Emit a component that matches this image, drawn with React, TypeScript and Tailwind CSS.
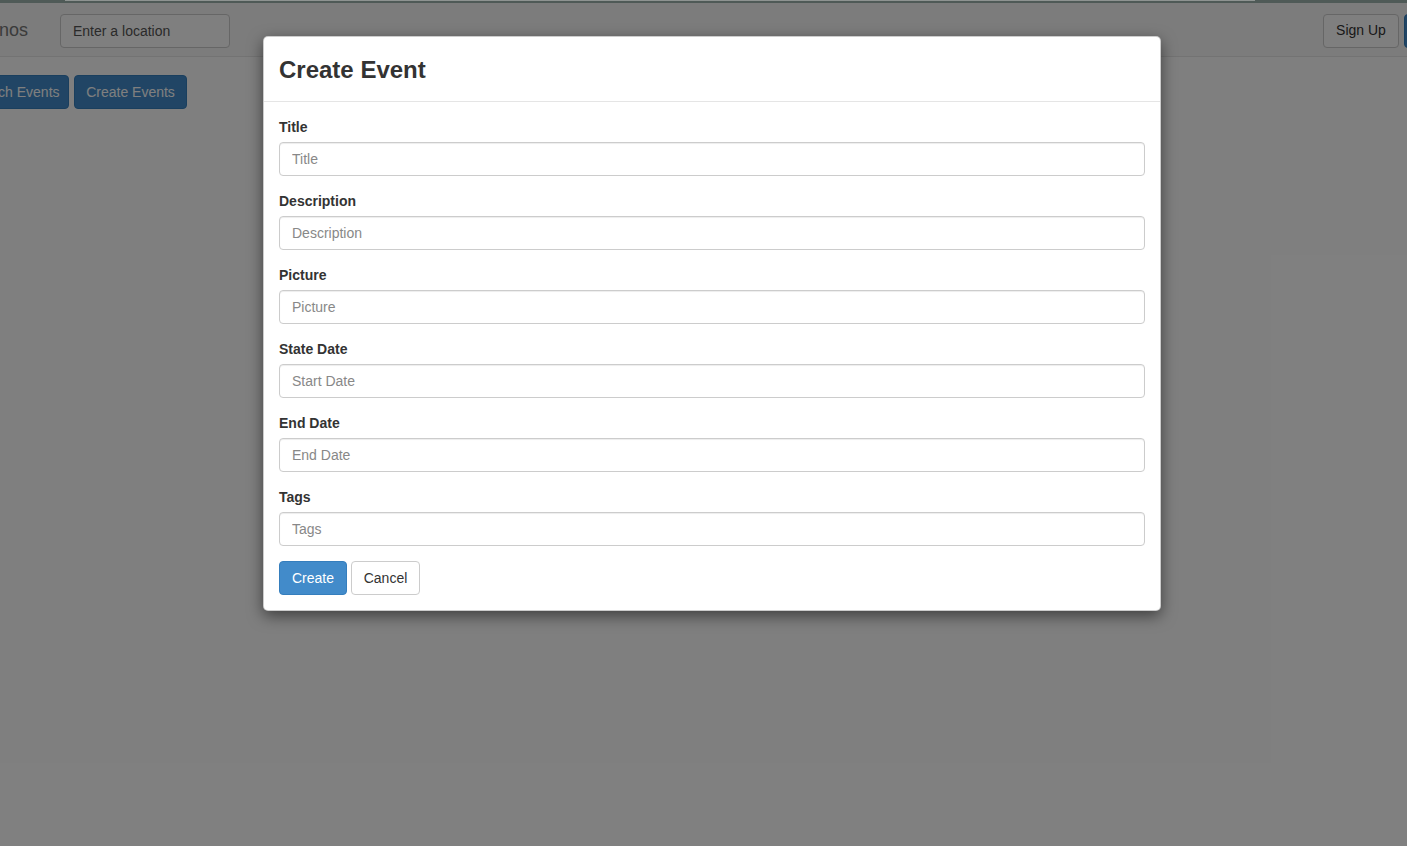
import { ReactNode } from 'react'

const fields = [
  { label: 'Title', placeholder: 'Title' },
  { label: 'Description', placeholder: 'Description' },
  { label: 'Picture', placeholder: 'Picture' },
  { label: 'State Date', placeholder: 'Start Date' },
  { label: 'End Date', placeholder: 'End Date' },
  { label: 'Tags', placeholder: 'Tags' }
]

function FormGroup({ label, children }: { label: string; children: ReactNode }) {
  return (
    <div className="mb-[15px]">
      <label className="block mb-[5px] text-[14px] leading-[20px] font-bold text-[#333]">{label}</label>
      {children}
    </div>
  )
}

export default function App() {
  return (
    <div
      className="relative h-[846px] w-full overflow-hidden bg-white text-[#333]"
      style={{ fontFamily: '"Liberation Sans", Arial, sans-serif' }}
    >
      {/* 상단 바 */}
      <div className="h-[3px] bg-[#4f5a57] flex">
        <div className="ml-[65px] w-[1190px] h-[1px] bg-[#8e9391]" />
      </div>

      {/* 네비게이션 */}
      <nav className="h-[54px] pt-[2px] bg-[#f8f8f8] border-b border-[#e7e7e7] flex items-center overflow-hidden">
        <div className="-ml-[55px] w-[115px] shrink-0 text-[18px] text-[#777] whitespace-nowrap">Hermanos</div>
        <input
          className="w-[170px] h-[34px] px-[12px] text-[14px] border border-[#ccc] rounded-[4px] bg-white placeholder:text-[#555] outline-none"
          placeholder="Enter a location"
        />
        <div className="flex-1" />
        <button className="h-[34px] w-[76px] shrink-0 whitespace-nowrap text-[14px] text-[#333] bg-white border border-[#ccc] rounded-[4px]">
          Sign Up
        </button>
        <button className="ml-[5px] h-[34px] w-[70px] shrink-0 whitespace-nowrap text-[14px] text-white bg-[#428bca] border border-[#357ebd] rounded-[4px] -mr-[67px]">
          Log In
        </button>
      </nav>

      {/* 버튼 */}
      <div className="flex gap-[5px] mt-[18px] overflow-hidden">
        <button className="-ml-[41px] h-[34px] w-[110px] shrink-0 whitespace-nowrap text-[14px] text-white bg-[#428bca] border border-[#357ebd] rounded-[4px]">
          Search Events
        </button>
        <button className="h-[34px] w-[113px] shrink-0 whitespace-nowrap text-[14px] text-white bg-[#428bca] border border-[#357ebd] rounded-[4px]">
          Create Events
        </button>
      </div>

      {/* 모달 */}
      <div className="absolute inset-x-0 top-[3px] bottom-0 bg-black/50 pt-[33px] pl-[263px]">
        <div className="w-[898px] bg-white border border-black/20 rounded-[5px] shadow-[0_5px_15px_rgba(0,0,0,0.5)]">
          <div className="h-[65px] px-[15px] pt-[2px] flex items-center border-b border-[#e5e5e5]">
            <h3 className="text-[24px] font-bold text-[#333] leading-none">Create Event</h3>
          </div>
          <div className="px-[15px] pt-[15px] pb-[15px]">
            {fields.map((f) => (
              <FormGroup key={f.label} label={f.label}>
                <input
                  className="block w-full h-[34px] px-[12px] text-[14px] border border-[#ccc] rounded-[4px] placeholder:text-[#888] outline-none shadow-[inset_0_1px_1px_rgba(0,0,0,0.075)]"
                  placeholder={f.placeholder}
                />
              </FormGroup>
            ))}
            <div className="flex gap-[4px]">
              <button className="h-[34px] w-[68px] text-[14px] text-white bg-[#428bca] border border-[#357ebd] rounded-[4px]">
                Create
              </button>
              <button className="h-[34px] w-[69px] text-[14px] text-[#333] bg-white border border-[#ccc] rounded-[4px]">
                Cancel
              </button>
            </div>
          </div>
        </div>
      </div>
    </div>
  )
}
